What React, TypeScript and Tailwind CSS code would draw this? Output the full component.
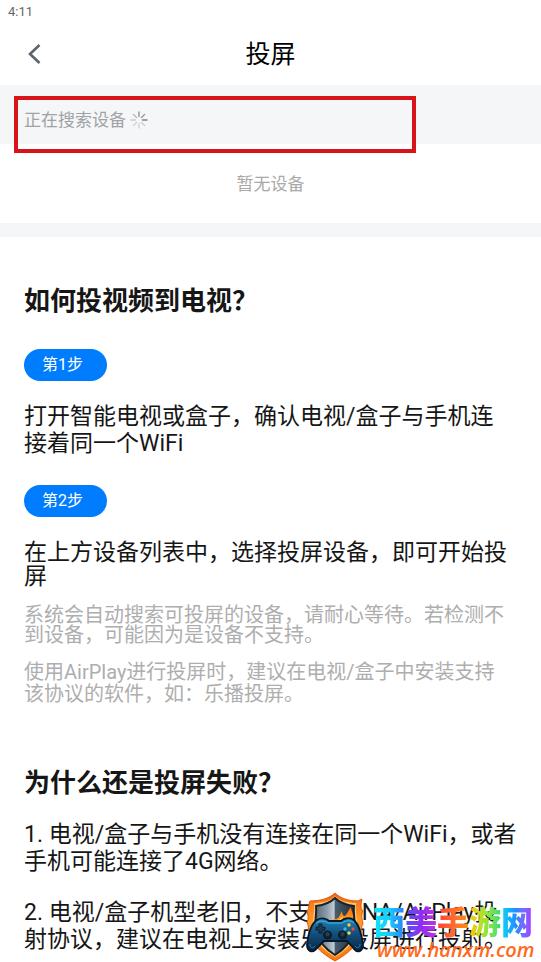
import type { ReactNode } from "react";

const spokes = [
  { angle: 0, color: "#8a8d91" },
  { angle: 45, color: "#8f9296" },
  { angle: 90, color: "#7f8286" },
  { angle: 135, color: "#c9cbce" },
  { angle: 180, color: "#d0d2d5" },
  { angle: 225, color: "#cfd1d4" },
  { angle: 270, color: "#c8cacd" },
  { angle: 315, color: "#b3b6b9" },
];

function Spinner() {
  return (
    <svg viewBox="0 0 18 18" className="h-[18px] w-[18px]" aria-hidden="true">
      {spokes.map(({ angle, color }) => (
        <line
          key={angle}
          x1="9"
          y1="1"
          x2="9"
          y2="5.5"
          stroke={color}
          strokeWidth="1.3"
          strokeLinecap="round"
          transform={`rotate(${angle} 9 9)`}
        />
      ))}
    </svg>
  );
}

function StepBadge({ children }: { children: ReactNode }) {
  return (
    <span className="flex h-8 w-fit items-center rounded-full bg-[#007dff] pr-6 pl-[18px] text-[16px] leading-6 text-white">
      {children}
    </span>
  );
}

function ShieldLogo() {
  return (
    <svg viewBox="0 0 60 70" className="h-[70px] w-[60px] shrink-0" aria-hidden="true">
      <defs>
        <linearGradient id="rim" x1="0" y1="0" x2="0" y2="1">
          <stop offset="0" stopColor="#f26a12" />
          <stop offset="0.4" stopColor="#ff9a2c" />
          <stop offset="1" stopColor="#f47a10" />
        </linearGradient>
        <linearGradient id="steel" x1="0" y1="0" x2="1" y2="0">
          <stop offset="0" stopColor="#566878" />
          <stop offset="0.3" stopColor="#8e9eab" />
          <stop offset="0.48" stopColor="#c3ced6" />
          <stop offset="0.5" stopColor="#4a5f70" />
          <stop offset="1" stopColor="#1c2d3b" />
        </linearGradient>
        <linearGradient id="pad" x1="0" y1="0" x2="0" y2="1">
          <stop offset="0" stopColor="#1e86bd" />
          <stop offset="0.45" stopColor="#12517e" />
          <stop offset="1" stopColor="#0a2340" />
        </linearGradient>
        <linearGradient id="fire" x1="0" y1="0" x2="0" y2="1">
          <stop offset="0" stopColor="#ff6a10" />
          <stop offset="0.6" stopColor="#ff9b1c" />
          <stop offset="1" stopColor="#ffe052" />
        </linearGradient>
      </defs>
      <path
        d="M30 1C35 6 43 9 53 9L57 7C56 12 55 16 58 19C56 23 57 27 58 32C56 34 57 37 56 40C54 52 44 61 30 69C16 61 6 52 4 40C3 37 4 34 2 30C4 27 3 23 2 19C5 16 3 12 5 9C16 9 25 6 30 1Z"
        fill="url(#rim)"
        stroke="#e4540c"
        strokeWidth="1"
      />
      <path
        d="M30 4C35 9 42 11 51 11C50 23 54 30 51 40C48 53 39 60 30 65C21 60 12 53 9 40C6 30 10 23 9 11C18 11 25 9 30 4Z"
        fill="#ffc66b"
      />
      <path
        d="M30 6C35 11 41 13 49 14C48 23 51 31 49 39C46 51 38 58 30 63C22 58 14 51 11 39C9 31 12 23 11 14C19 13 25 11 30 6Z"
        fill="url(#steel)"
        stroke="#1c222b"
        strokeWidth="2"
      />
      <path
        d="M25 31C27 28 29 28 29 26C30 27 31 28 33 26C35 24 35 22 37 19C37 22 38 24 40 24C43 21 43 18 46 15C46 19 49 21 48 29L51 37H25Z"
        fill="url(#fire)"
      />
      <path d="M31 30C33 28 35 28 37 25C38 28 41 27 43 24C43 26 46 28 46 32H30Z" fill="#ffe254" />
      <path
        d="M12 28C17 25 22 27 24 29H36C39 26 45 25 49 28C54 33 57 44 58 53C58 59 53 61 50 58L42 49H19L10 58C7 61 2 59 2 53C3 43 6 32 12 28Z"
        fill="url(#pad)"
        stroke="#07182b"
        strokeWidth="1.8"
      />
      <path d="M11 31C15 28 20 29 23 31H37C41 28 46 28 49 31" fill="none" stroke="#44b9e4" strokeWidth="1" />
      <path d="M5 52C5 56 8 57 10 54M55 52C55 56 52 57 50 54" fill="none" stroke="#2583b8" strokeWidth="1" />
      <path
        d="M14 32H17V35H20V38H17V41H14V38H11V35H14Z"
        fill="#23394d"
        stroke="#071522"
        strokeWidth="0.8"
      />
      <circle cx="22.5" cy="43" r="4" fill="#17222e" stroke="#071522" />
      <circle cx="37.5" cy="43" r="4" fill="#17222e" stroke="#071522" />
      <circle cx="22.5" cy="42" r="2.2" fill="#2b3b49" />
      <circle cx="37.5" cy="42" r="2.2" fill="#2b3b49" />
      <circle cx="44" cy="33" r="1.7" fill="#ffc928" />
      <circle cx="40" cy="37" r="1.7" fill="#39b7ee" />
      <circle cx="48" cy="37" r="1.7" fill="#ff452c" />
      <circle cx="44" cy="41" r="1.7" fill="#ffd339" />
    </svg>
  );
}

function Watermark() {
  return (
    <div className="absolute right-0 bottom-0 flex items-end gap-1">
      <ShieldLogo />
      <div className="w-[172px] pl-1">
        <p className="flex font-['Noto_Sans_CJK_SC',sans-serif] text-[32px] leading-9 font-black">
          <span className="bg-linear-to-r from-[#10e6f4] via-[#18ccff] to-[#2b7cff] bg-clip-text text-transparent">西</span>
          <span className="bg-linear-to-r from-[#4a50f4] via-[#8f2bf2] to-[#c42fe8] bg-clip-text text-transparent">美</span>
          <span className="bg-linear-to-r from-[#ff3c3c] to-[#ff8c0c] bg-clip-text text-transparent">手</span>
          <span className="bg-linear-to-r from-[#ffc400] via-[#9be52c] to-[#28dc78] bg-clip-text text-transparent">游</span>
          <span className="bg-linear-to-r from-[#10d8f4] via-[#2388ff] to-[#a62cff] bg-clip-text text-transparent">网</span>
        </p>
        <p className="pl-1 font-['Open_Sans',sans-serif] text-[20px] leading-6 font-semibold text-[#ff6a1c] italic">
          www.hanxm.com
        </p>
      </div>
    </div>
  );
}

export default function App() {
  return (
    <div
      lang="zh-CN"
      className="relative h-screen overflow-hidden bg-white font-[Roboto,'Noto_Sans_CJK_SC',sans-serif] text-[#161616]"
    >
      <div className="flex h-6 items-center px-2 text-[13px] text-[#666]">4:11</div>

      <header className="grid h-[61px] grid-cols-[1fr_auto_1fr] items-center px-6">
        <button type="button" aria-label="返回" className="w-fit pb-0.5">
          <svg viewBox="0 0 20 24" className="h-6 w-5" fill="none" aria-hidden="true">
            <path d="M15.5 3L6 12L15.5 21" stroke="#5a6470" strokeWidth="2.6" />
          </svg>
        </button>
        <h1 className="text-[25px] leading-8 text-black">投屏</h1>
      </header>

      <section className="relative">
        <div className="flex h-[59px] items-center gap-1 bg-[#f4f6f8] px-6 pt-2.5">
          <p className="text-[17px] leading-6 text-[#a0a2a5]">正在搜索设备</p>
          <Spinner />
        </div>
        <div className="absolute top-[11px] left-[14px] h-[57px] w-[402px] border-4 border-[#d8131a]" />
        <p className="flex h-[79px] items-center justify-center pt-0.5 text-[17px] text-[#a8a8a8]">暂无设备</p>
      </section>
      <div className="h-[14px] bg-[#f4f6f8]" />

      <main className="px-6 pt-12 text-[23px] leading-[27px]">
        <h2 className="text-[26px] leading-8 font-bold">如何投视频到电视？</h2>

        <div className="pt-8 pr-2">
          <StepBadge>第1步</StepBadge>
          <p className="pt-[22px]">打开智能电视或盒子，确认电视/盒子与手机连接着同一个WiFi</p>
        </div>

        <div className="pt-7 pr-2">
          <StepBadge>第2步</StepBadge>
          <p className="pt-6 leading-6">在上方设备列表中，选择投屏设备，即可开始投屏</p>
        </div>

        <div className="flex flex-col gap-4 pt-4 pr-2 text-[20px] text-[#aeaeae]">
          <p className="leading-5">系统会自动搜索可投屏的设备，请耐心等待。若检测不到设备，可能因为是设备不支持。</p>
          <p className="leading-[22px]">使用AirPlay进行投屏时，建议在电视/盒子中安装支持该协议的软件，如：乐播投屏。</p>
        </div>

        <h2 className="pt-[62px] text-[26px] leading-8 font-bold">为什么还是投屏失败？</h2>
        <p className="pt-[22px]">1. 电视/盒子与手机没有连接在同一个WiFi，或者手机可能连接了4G网络。</p>
        <p className="pt-6">2. 电视/盒子机型老旧，不支持DLNA/AirPlay投射协议，建议在电视上安装乐播投屏进行投射。</p>
      </main>

      <Watermark />
    </div>
  );
}
